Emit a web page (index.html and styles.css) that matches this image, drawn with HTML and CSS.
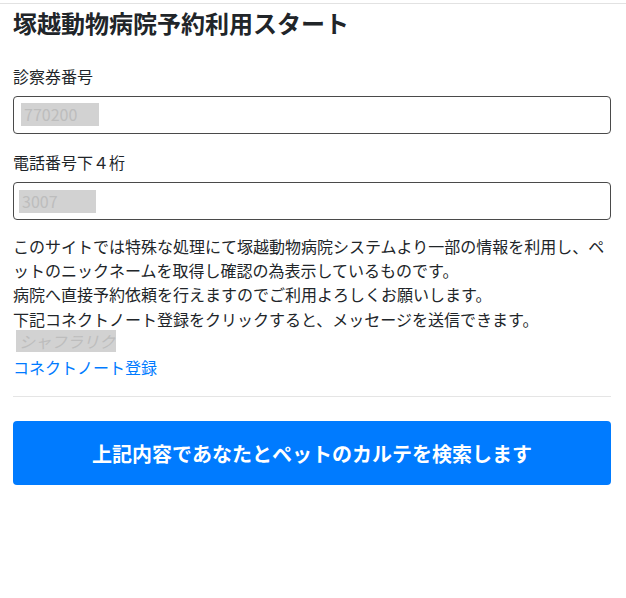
FILE: index.html
```html
<!DOCTYPE html>
<html lang="ja">
<head>
<meta charset="utf-8">
<title>塚越動物病院予約利用スタート</title>
<link rel="stylesheet" href="styles.css">
</head>
<body>
<div class="topline"></div>
<main class="page">
  <h1 class="title">塚越動物病院予約利用スタート</h1>
  <div class="field">
    <label class="label">診察券番号</label>
    <div class="input"><span class="masked masked-1">770200</span></div>
  </div>
  <div class="field">
    <label class="label">電話番号下４桁</label>
    <div class="input"><span class="masked masked-2">3007</span></div>
  </div>
  <p class="notice">このサイトでは特殊な処理にて塚越動物病院システムより一部の情報を利用し、ペットのニックネームを取得し確認の為表示しているものです。<br>病院へ直接予約依頼を行えますのでご利用よろしくお願いします。<br>下記コネクトノート登録をクリックすると、メッセージを送信できます。<br><span class="masked masked-3">シャフラリク</span><br><a class="link" href="#">コネクトノート登録</a></p>
  <hr class="divider">
  <button class="submit" type="button">上記内容であなたとペットのカルテを検索します</button>
</main>
</body>
</html>
```
FILE: styles.css
```css
* { box-sizing: border-box; }
html, body { margin: 0; padding: 0; background: #fff; }
body {
  font-family: "Noto Sans CJK JP", "Noto Sans", sans-serif;
  color: #212529;
  font-size: 16px;
  line-height: 24px;
}
.topline {
  margin-top: 3px;
  border-top: 1px solid #e2e2e2;
}
.page {
  width: 626px;
  padding: 0 15px 0 13px;
}
.title {
  margin: 4px 0 0;
  font-size: 24px;
  line-height: 29px;
  font-weight: 700;
}
.field { display: flex; flex-direction: column; }
.field:first-of-type { margin-top: 27px; }
.label {
  display: block;
  font-size: 16px;
  line-height: 24px;
  margin-bottom: 8px;
}
.field + .field { margin-top: 16px; }
.input {
  height: 38px;
  border: 1px solid #4a4a4a;
  border-radius: 4px;
  display: flex;
  align-items: center;
  padding-left: 7px;
}
.masked {
  display: inline-block;
  background: #d2d2d2;
  color: #bdbdbd;
  font-size: 16px;
  line-height: 23px;
  padding-left: 3px;
}
.masked-1 { width: 78px; margin-top: -2px; }
.masked-2 { width: 77px; margin-left: -2px; }
.masked-3 {
  width: 100px;
  margin-left: 3px;
  vertical-align: top;
  line-height: 22px;
  margin-top: -1px;
  font-style: italic;
}
.notice {
  margin: 14px 0 0;
  font-size: 16px;
  line-height: 24.2px;
}
.link { color: #007bff; text-decoration: none; }
.divider {
  margin: 17px 0 0;
  border: 0;
  border-top: 1px solid #e5e5e5;
}
.submit {
  display: block;
  width: 100%;
  margin-top: 24px;
  height: 64px;
  border: 0;
  border-radius: 4px;
  background: #007bff;
  color: #fff;
  font-family: "Noto Sans CJK JP", "Noto Sans", sans-serif;
  font-size: 20px;
  font-weight: 700;
}
```
